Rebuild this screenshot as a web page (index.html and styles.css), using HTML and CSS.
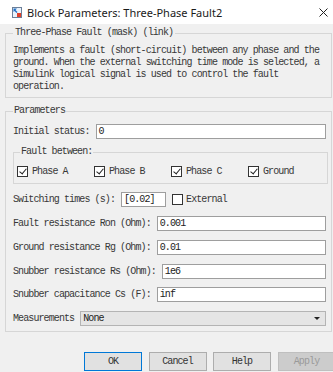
FILE: index.html
```html
<!DOCTYPE html>
<html>
<head>
<meta charset="utf-8">
<link rel="stylesheet" href="styles.css">
</head>
<body>
<div class="titlebar">
  <svg class="appicon" width="10" height="11" viewBox="0 0 10 11">
    <rect x="0.5" y="0.5" width="9" height="10" fill="#eaf2fb" stroke="#6b7f99"/>
    <path d="M1.5 1.5 L5 1.5 L3.5 3 L5.5 5 L4.5 6 L2.5 4 L1.5 5 Z" fill="#1f6fc5"/>
    <rect x="5" y="6" width="4" height="4" fill="#e0412b"/>
  </svg>
  <span class="title">Block Parameters: Three-Phase Fault2</span>
  <svg class="close" width="9" height="9" viewBox="0 0 9 9">
    <path d="M0.5 0.5 L8.5 8.5 M8.5 0.5 L0.5 8.5" stroke="#222" stroke-width="1"/>
  </svg>
</div>
<div class="main">
  <fieldset class="group desc">
    <legend>Three-Phase Fault (mask) (link)</legend>
    <p class="desctext">Implements a fault (short-circuit) between any phase and the<br>ground. When the external switching time mode is selected, a<br>Simulink logical signal is used to control the fault<br>operation.</p>
  </fieldset>
  <fieldset class="group params">
    <legend>Parameters</legend>
    <div class="row first"><span class="label">Initial status:</span><span class="field">0</span></div>
    <fieldset class="sub">
      <legend>Fault between:</legend>
      <div class="checks">
        <span class="check"><span class="box on"></span>Phase A</span>
        <span class="check"><span class="box on"></span>Phase B</span>
        <span class="check"><span class="box on"></span>Phase C</span>
        <span class="check"><span class="box on"></span>Ground</span>
      </div>
    </fieldset>
    <div class="row sw"><span class="label">Switching times (s):</span><span class="field short">[0.02]</span><span class="check ext"><span class="box"></span>External</span></div>
    <div class="row"><span class="label">Fault resistance Ron (Ohm):</span><span class="field">0.001</span></div>
    <div class="row"><span class="label">Ground resistance Rg (Ohm):</span><span class="field">0.01</span></div>
    <div class="row"><span class="label">Snubber resistance Rs (Ohm):</span><span class="field">1e6</span></div>
    <div class="row m8"><span class="label">Snubber capacitance Cs (F):</span><span class="field">inf</span></div>
    <div class="row"><span class="label">Measurements</span><span class="field select">None<span class="arrow"></span></span></div>
  </fieldset>
  <div class="buttons">
    <span class="btn default">OK</span>
    <span class="btn">Cancel</span>
    <span class="btn">Help</span>
    <span class="btn disabled">Apply</span>
  </div>
</div>
</body>
</html>
```
FILE: styles.css
```css
html, body {
  margin: 0;
  padding: 0;
  background: #f0f0f0;
  width: 333px;
  height: 372px;
  overflow: hidden;
}
.titlebar {
  height: 24px;
  background: #ffffff;
  display: flex;
  align-items: center;
  position: relative;
}
.appicon {
  margin-left: 12px;
  margin-right: 5px;
  flex: none;
}
.title {
  font-family: "Noto Sans", "Liberation Sans", sans-serif;
  font-size: 11px;
  color: #1a1a1a;
  white-space: nowrap;
}
.close {
  margin-left: auto;
  margin-right: 5px;
  flex: none;
}
.main {
  padding: 3px 1px 0 5px;
  font-family: "Liberation Mono", monospace;
  font-size: 10px;
  letter-spacing: -0.9px;
  color: #383838;
}
fieldset {
  margin: 0;
  min-width: 0;
  border: 1px solid #d6d6d6;
}
legend {
  line-height: 12px;
  height: 12px;
  padding: 0 2px;
  color: #383838;
}
.desc {
  padding: 6px 7px 4px 7px;
}
.desctext {
  margin: 0;
  line-height: 12px;
  white-space: nowrap;
}
.params {
  margin-top: 7px;
  padding: 7px 5px 5px 7px;
}
.params > legend {
  padding: 0 1px;
}
.row {
  display: flex;
  align-items: center;
  height: 15px;
  margin-top: 9px;
  white-space: nowrap;
}
.row.first { margin-top: 0; }
.row.sw { margin-top: 8px; }
.row.m8 { margin-top: 8px; }
.label {
  flex: none;
  margin-right: 6px;
}
.field {
  flex: 1;
  height: 15px;
  box-sizing: border-box;
  border: 1px solid #9e9e9e;
  background: #fff;
  line-height: 13px;
  padding-left: 2px;
  color: #222;
}
.field.short {
  flex: none;
  width: 45px;
}
.field.select {
  background: #e5e5e5;
  border-color: #b4b4b4;
  position: relative;
}
.arrow {
  position: absolute;
  right: 5px;
  top: 5px;
  width: 0;
  height: 0;
  border-left: 3px solid transparent;
  border-right: 3px solid transparent;
  border-top: 3px solid #222;
}
.sub {
  margin: 7px -2px 0 0;
  padding: 5px 3px 4px 3px;
}
.sub > legend {
  margin-left: 3px;
  padding: 0 1px;
}
.checks {
  display: grid;
  grid-template-columns: repeat(4, 77px);
  height: 16px;
  align-items: center;
}
.check {
  display: flex;
  align-items: center;
  white-space: nowrap;
}
.box {
  width: 11px;
  height: 11px;
  box-sizing: border-box;
  border: 1px solid #333;
  background: #fff;
  margin-right: 4px;
  flex: none;
  position: relative;
}
.box.on::after {
  content: "";
  position: absolute;
  left: 3px;
  top: 0px;
  width: 3px;
  height: 6px;
  border-right: 1.3px solid #222;
  border-bottom: 1.3px solid #222;
  transform: rotate(40deg);
}
.ext {
  margin-left: 6px;
}
.ext .box {
  margin-right: 3px;
}
.buttons {
  display: flex;
  gap: 6.5px;
  margin-top: 20px;
  padding-left: 79px;
}
.btn {
  flex: none;
  width: 58px;
  height: 19px;
  box-sizing: border-box;
  border: 1px solid #adadad;
  background: #e1e1e1;
  text-align: center;
  line-height: 17px;
  color: #333;
}
.btn.default {
  border-color: #0078d7;
}
.btn.disabled {
  background: #cccccc;
  border-color: #bfbfbf;
  color: #9a9a9a;
}
```
